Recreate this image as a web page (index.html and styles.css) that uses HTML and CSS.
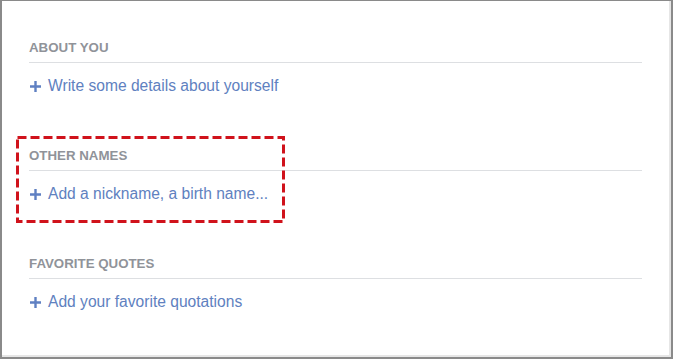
FILE: index.html
```html
<!DOCTYPE html>
<html>
<head>
<meta charset="utf-8">
<link rel="stylesheet" href="styles.css">
</head>
<body>
<div class="frame">
  <section class="block">
    <h2 class="title">ABOUT YOU</h2>
    <a class="add" href="#"><svg class="plus" width="11" height="11" viewBox="0 0 11 11"><path d="M0 5.5H11M5.5 0V11" stroke="#5f80c2" stroke-width="2.4"/></svg>Write some details about yourself</a>
  </section>
  <section class="block">
    <h2 class="title">OTHER NAMES</h2>
    <a class="add" href="#"><svg class="plus" width="11" height="11" viewBox="0 0 11 11"><path d="M0 5.5H11M5.5 0V11" stroke="#5f80c2" stroke-width="2.4"/></svg>Add a nickname, a birth name...</a>
  </section>
  <section class="block">
    <h2 class="title">FAVORITE QUOTES</h2>
    <a class="add" href="#"><svg class="plus" width="11" height="11" viewBox="0 0 11 11"><path d="M0 5.5H11M5.5 0V11" stroke="#5f80c2" stroke-width="2.4"/></svg>Add your favorite quotations</a>
  </section>
  <svg class="highlight" width="270" height="88" viewBox="0 0 270 88">
    <rect x="1.5" y="1.5" width="266" height="84" fill="none" stroke="#d0121b" stroke-width="3" stroke-dasharray="9 4"/>
  </svg>
</div>
</body>
</html>
```
FILE: styles.css
```css
html, body {
  margin: 0;
  padding: 0;
  background: #fff;
}
.frame {
  position: relative;
  box-sizing: border-box;
  width: 673px;
  height: 359px;
  border-top: 1px solid #8a8a8a;
  border-left: 2px solid #8a8a8a;
  border-right: 2px solid #8a8a8a;
  border-bottom: 2px solid #8a8a8a;
  box-shadow: inset -2px -2px 0 #e6e6e6;
  padding: 32px 29px 0 27px;
  font-family: "Liberation Sans", Arial, sans-serif;
  display: flex;
  flex-direction: column;
}
.block {
  display: flex;
  flex-direction: column;
  height: 108px;
}
.title {
  margin: 0;
  font-size: 13.3px;
  font-weight: bold;
  color: #909399;
  line-height: 16px;
  padding: 7px 0 6px;
  border-bottom: 1px solid #dddfe2;
}
.add {
  margin-top: 14px;
  font-size: 15.6px;
  line-height: 18px;
  color: #6081c0;
  text-decoration: none;
  display: flex;
  align-items: center;
}
.plus {
  margin: 0 7px 0 1px;
  flex: none;
}
.highlight {
  position: absolute;
  left: 14px;
  top: 135px;
}
```
